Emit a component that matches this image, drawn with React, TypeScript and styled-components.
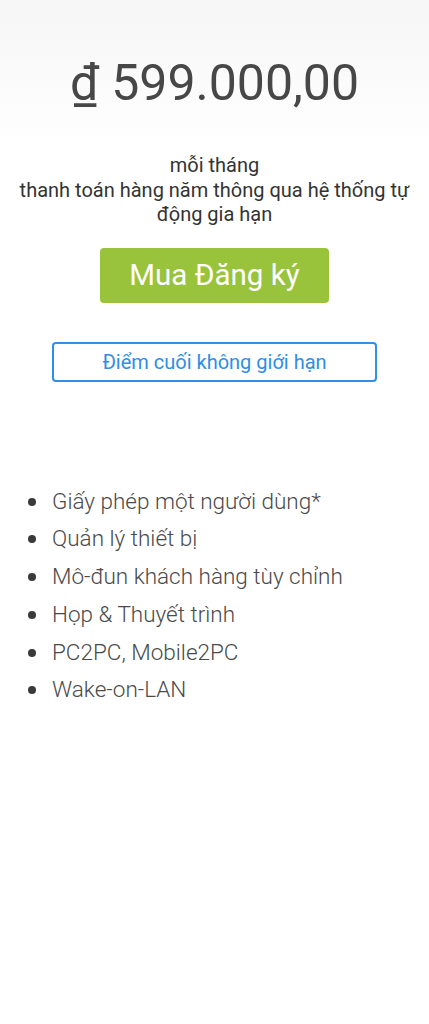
import React from 'react';
import styled, { createGlobalStyle } from 'styled-components';

const GlobalStyle = createGlobalStyle`
  html, body {
    margin: 0;
    padding: 0;
    background: #ffffff;
  }
  body {
    font-family: Roboto, "Noto Sans", sans-serif;
  }
`;

const Page = styled.div`
  min-height: 1024px;
  background: linear-gradient(to bottom, #f6f6f6 0px, #ffffff 150px);
  padding-top: 54px;
  box-sizing: border-box;
`;

const PriceBlock = styled.div`
  display: flex;
  flex-direction: column;
  align-items: center;
  text-align: center;
`;

const Price = styled.div`
  font-size: 50px;
  line-height: 58px;
  color: #474747;
`;

const Currency = styled.span`
  text-decoration: none;
`;

const Period = styled.div`
  margin-top: 41px;
  padding: 0 16px;
  font-size: 20px;
  line-height: 24.5px;
  color: #333333;
`;

const BuyButton = styled.button`
  margin-top: 21px;
  width: 229px;
  height: 55px;
  border: none;
  border-radius: 4px;
  background: #99c33b;
  color: #ffffff;
  font-family: Roboto, "Noto Sans", sans-serif;
  font-size: 29.5px;
  cursor: pointer;
`;

const OutlineButton = styled.button`
  margin-top: 39px;
  width: 325px;
  height: 40px;
  border: 2px solid #2e90ea;
  border-radius: 4px;
  background: #ffffff;
  color: #2e8ee6;
  font-family: Roboto, "Noto Sans", sans-serif;
  font-size: 20px;
  cursor: pointer;
`;

const Features = styled.ul`
  margin: 101px 0 0;
  padding: 0 0 0 52px;
  list-style: none;
`;

const Feature = styled.li`
  position: relative;
  font-size: 22.5px;
  font-weight: 300;
  line-height: 37.8px;
  color: #4a4a4a;

  &::before {
    content: '';
    position: absolute;
    left: -24px;
    top: 15px;
    width: 8px;
    height: 8px;
    border-radius: 50%;
    background: #3a3a3a;
  }
`;

const features = [
  'Giấy phép một người dùng*',
  'Quản lý thiết bị',
  'Mô-đun khách hàng tùy chỉnh',
  'Họp & Thuyết trình',
  'PC2PC, Mobile2PC',
  'Wake-on-LAN',
];

export default function App() {
  return (
    <>
      <GlobalStyle />
      <Page>
        <PriceBlock>
          <Price>
            <Currency>₫</Currency> 599.000,00
          </Price>
          <Period>
            mỗi tháng
            <br />
            thanh toán hàng năm thông qua hệ thống tự động gia hạn
          </Period>
          <BuyButton>Mua Đăng ký</BuyButton>
          <OutlineButton>Điểm cuối không giới hạn</OutlineButton>
        </PriceBlock>
        <Features>
          {features.map((f) => (
            <Feature key={f}>{f}</Feature>
          ))}
        </Features>
      </Page>
    </>
  );
}
